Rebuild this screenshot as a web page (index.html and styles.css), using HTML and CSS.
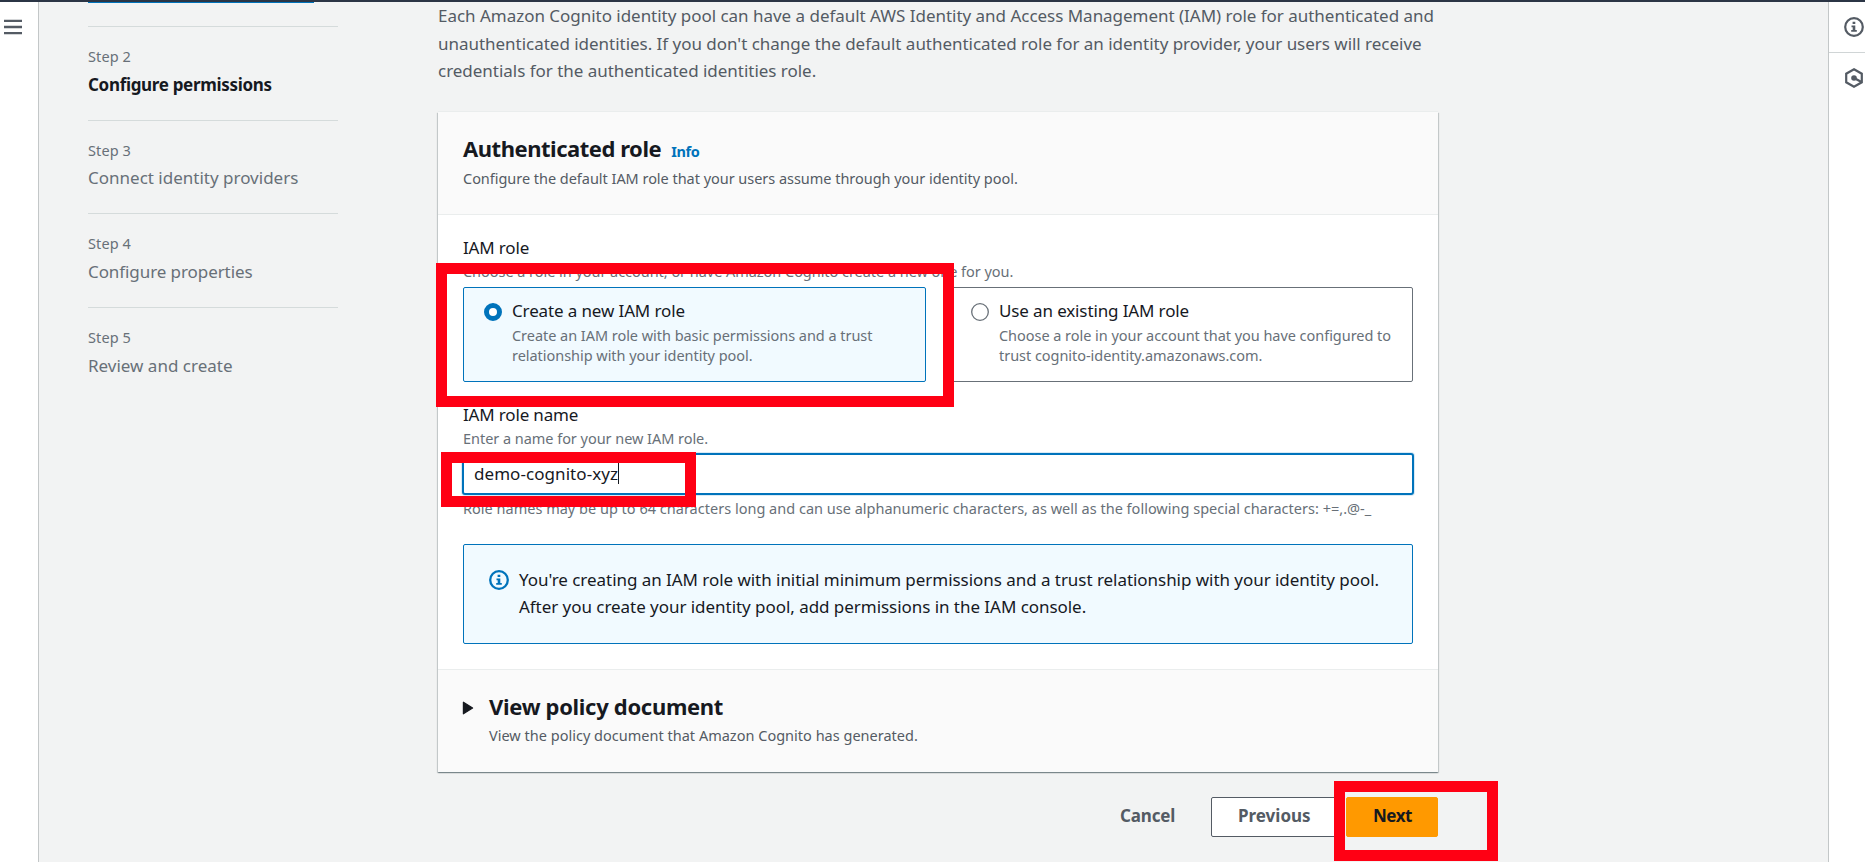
FILE: index.html
```
<!DOCTYPE html>
<html lang="en">
<head>
<meta charset="utf-8">
<title>Configure permissions - Amazon Cognito</title>
<link rel="stylesheet" href="styles.css">
</head>
<body>
<div class="topbar"></div>
<div class="shell">
  <nav class="rail rail-left">
    <svg class="menu-icon" width="18" height="16" viewBox="0 0 18 16"><path d="M0 1.9h18M0 8h18M0 14.1h18" stroke="#545b64" stroke-width="2.3"/></svg>
  </nav>

  <main class="main">
    <aside class="steps">
      <div class="step-first"><div class="step-underline"></div></div>
      <div class="step"><div class="step-label">Step 2</div><div class="step-name current">Configure permissions</div></div>
      <div class="step"><div class="step-label">Step 3</div><div class="step-name">Connect identity providers</div></div>
      <div class="step"><div class="step-label">Step 4</div><div class="step-name tight">Configure properties</div></div>
      <div class="step"><div class="step-label">Step 5</div><div class="step-name">Review and create</div></div>
    </aside>

    <div class="content">
      <p class="intro">Each Amazon Cognito identity pool can have a default AWS Identity and Access Management (IAM) role for authenticated and<br>unauthenticated identities. If you don't change the default authenticated role for an identity provider, your users will receive<br>credentials for the authenticated identities role.</p>

      <section class="card">
        <header class="card-header">
          <div class="title-row"><h2 class="title">Authenticated role</h2><a class="info">Info</a></div>
          <div class="subtitle">Configure the default IAM role that your users assume through your identity pool.</div>
        </header>

        <div class="card-body">
          <div class="label">IAM role</div>
          <div class="hint">Choose a role in your account, or have Amazon Cognito create a new one for you.</div>
          <div class="tiles">
            <div class="tile selected">
              <svg class="radio" width="18" height="18" viewBox="0 0 18 18"><circle cx="9" cy="9" r="6.5" fill="#fff" stroke="#0073bb" stroke-width="5"/></svg>
              <div>
                <div class="tile-title">Create a new IAM role</div>
                <div class="tile-desc">Create an IAM role with basic permissions and a trust<br>relationship with your identity pool.</div>
              </div>
            </div>
            <div class="tile">
              <svg class="radio" width="18" height="18" viewBox="0 0 18 18"><circle cx="9" cy="9" r="8.3" fill="#fff" stroke="#687078" stroke-width="1.3"/></svg>
              <div>
                <div class="tile-title">Use an existing IAM role</div>
                <div class="tile-desc">Choose a role in your account that you have configured to<br>trust cognito-identity.amazonaws.com.</div>
              </div>
            </div>
          </div>

          <div class="label name-label">IAM role name</div>
          <div class="hint">Enter a name for your new IAM role.</div>
          <div class="input"><span class="input-text">demo-cognito-xyz</span><span class="caret"></span></div>
          <div class="hint constraint">Role names may be up to 64 characters long and can use alphanumeric characters, as well as the following special characters: +=,.@-_</div>

          <div class="alert">
            <svg class="alert-icon" width="20" height="20" viewBox="0 0 20 20"><circle cx="10" cy="10" r="8.8" fill="none" stroke="#0073bb" stroke-width="2.3"/><path d="M8.6 4.8h2.7v2.3H8.6zM7.5 8.5h3.8v4.4h1.5v1.9H7.2v-1.9h1.5v-2.6H7.5z" fill="#0073bb"/></svg>
            <div class="alert-text">You're creating an IAM role with initial minimum permissions and a trust relationship with your identity pool.<br>After you create your identity pool, add permissions in the IAM console.</div>
          </div>
        </div>

        <footer class="card-footer">
          <svg class="arrow" width="12" height="14" viewBox="0 0 12 14"><path d="M1.4 1.2v11.6L10.600 7z" fill="#16191f" stroke="#16191f" stroke-width="1.2" stroke-linejoin="round"/></svg>
          <div>
            <h2 class="title policy">View policy document</h2>
            <div class="subtitle policy-note">View the policy document that Amazon Cognito has generated.</div>
          </div>
        </footer>
      </section>

      <div class="actions">
        <button class="btn link">Cancel</button>
        <button class="btn normal">Previous</button>
        <button class="btn primary">Next</button>
      </div>
    </div>
  </main>

  <aside class="rail rail-right">
    <div class="tool tool-info"><svg width="20" height="20" viewBox="0 0 20 20"><circle cx="10" cy="10" r="8.8" fill="none" stroke="#545b64" stroke-width="2.2"/><path d="M8.6 4.8h2.7v2.3H8.6zM7.5 8.5h3.8v4.4h1.5v1.9H7.2v-1.9h1.5v-2.6H7.5z" fill="#545b64"/></svg></div>
    <div class="tool"><svg width="20" height="20" viewBox="0 0 20 20"><path d="M10 1.3l7.8 4.4v8.6L10 18.7l-7.8-4.4V5.7z" fill="none" stroke="#545b64" stroke-width="2.2"/><circle cx="10" cy="10" r="2.8" fill="#545b64"/><path d="M10 10l7.5 4" stroke="#545b64" stroke-width="2.4"/></svg></div>
  </aside>
</div>

<div class="mark mark-role"></div>
<div class="mark mark-name"></div>
<div class="mark mark-next"></div>
</body>
</html>
```
FILE: styles.css
```
* { box-sizing: border-box; }
html, body { margin: 0; height: 862px; overflow: hidden; }
body {
  position: relative;
  display: flex;
  flex-direction: column;
  font-family: "Noto Sans", "Open Sans", sans-serif;
  font-size: 17px;
  color: #16191f;
  background: #f2f3f3;
}
h2, p { margin: 0; }
svg { display: block; flex: none; }

.topbar { height: 2px; flex: none; background: #2b3545; }
.shell { flex: 1; min-height: 0; display: flex; }

.rail { flex: none; background: #fff; }
.rail-left { width: 39px; border-right: 1px solid #c3c7c8; padding: 17px 0 0 4px; }
.rail-right { width: 37px; border-left: 1px solid #c3c7c8; }
.tool { height: 51px; padding: 15px 0 0 15px; }
.tool-info { border-bottom: 1px solid #d0d5d6; }

.main { flex: 1; min-width: 0; display: flex; padding-left: 49px; }

.steps { width: 250px; margin-right: 100px; flex: none; }
.step-first { height: 24px; }
.step-underline { width: 226px; height: 1px; background: #0073bb; }
.step { height: 93.7px; border-top: 1px solid #d5dbdb; padding-top: 19.1px; color: #687078; }
.step-label { font-size: 14.5px; line-height: 20px; letter-spacing: 0.1px; margin-bottom: 4.5px; }
.step-name { line-height: 27.5px; }
.current { color: #16191f; font-weight: 700; letter-spacing: -0.32px; }
.tight { letter-spacing: -0.08px; }

.content { width: 1000px; flex: none; }
.intro { padding-top: 0.3px; height: 110px; line-height: 27.5px; color: #545b64; letter-spacing: -0.025px; white-space: nowrap; }

.card {
  height: 660px;
  background: #fff;
  display: flex;
  flex-direction: column;
  box-shadow: 0 1px 1px 0 rgba(0, 28, 36, 0.3), 1px 1px 1px 0 rgba(0, 28, 36, 0.15), -1px 1px 1px 0 rgba(0, 28, 36, 0.15), 0 -1px 0 0 #eaeded;
}
.card-header { height: 103px; flex: none; padding: 21.5px 25px 0; background: #fafafa; border-bottom: 1px solid #eaeded; }
.title-row { display: flex; align-items: baseline; gap: 10px; }
.title { font-size: 22px; line-height: 28px; font-weight: 700; letter-spacing: -0.47px; }
.policy { letter-spacing: -0.31px; }
.info { font-size: 14.5px; font-weight: 700; color: #0073bb; letter-spacing: -0.4px; }
.subtitle { margin-top: 6.5px; font-size: 14.5px; line-height: 20px; letter-spacing: -0.033px; color: #545b64; }
.policy-note { margin-top: 5.5px; letter-spacing: 0.01px; }

.card-body { height: 454px; flex: none; padding: 22.4px 25px 0; }
.label { line-height: 22px; letter-spacing: -0.17px; }
.hint { margin-top: 2px; font-size: 14.5px; line-height: 20px; letter-spacing: -0.04px; color: #687078; white-space: nowrap; }
.tiles { display: grid; grid-template-columns: 463px 463px; gap: 24px; margin-top: 5.6px; }
.tile { height: 95px; display: flex; gap: 10px; padding: 12.4px 19px 0 20px; border: 1px solid #687078; border-radius: 2px; background: #fff; }
.selected { border-color: #0073bb; background: #f1faff; }
.radio { margin-top: 3px; }
.tile-title { line-height: 22px; letter-spacing: -0.13px; }
.tile-desc { margin-top: 3px; font-size: 14.5px; line-height: 20px; letter-spacing: -0.04px; color: #687078; white-space: nowrap; }
.name-label { margin-top: 22.4px; }
.input {
  display: flex;
  align-items: center;
  width: 952px;
  height: 42px;
  margin: 4.6px 0 0 -1px;
  padding: 0 0 1px 10px;
  border: 2px solid #0073bb;
  border-radius: 3px;
  background: #fff;
  box-shadow: 0 0 0 1px rgba(0, 115, 187, 0.15);
}
.input-text { letter-spacing: 0.06px; }
.caret { width: 1px; height: 22px; background: #16191f; }
.constraint { margin-top: 3px; letter-spacing: 0.01px; }
.alert { display: flex; gap: 10px; height: 100px; margin-top: 26px; padding: 21.2px 25px 0; border: 1px solid #0073bb; border-radius: 2px; background: #f1faff; }
.alert-icon { margin-top: 3.8px; }
.alert-text { line-height: 27px; letter-spacing: -0.045px; white-space: nowrap; }

.card-footer { flex: 1; display: flex; gap: 15px; padding: 21.5px 25px 0 24px; background: #fafafa; border-top: 1px solid #eaeded; }
.arrow { margin-top: 9px; }

.actions { display: flex; justify-content: flex-end; margin-top: 25px; }
.btn { height: 40px; font: 700 17px/22px "Noto Sans", sans-serif; padding: 0 26px 2px; border: 1px solid transparent; border-radius: 2px; }
.link { width: 109px; margin-right: 9px; background: none; color: #545b64; letter-spacing: -0.15px; }
.normal { width: 126px; margin-right: 9px; background: #fff; border-color: #545b64; color: #545b64; letter-spacing: 0; }
.primary { width: 92px; background: #ff9900; border-color: #ff9900; color: #16191f; letter-spacing: -0.5px; }

/* Highlight frames laid over the page */
.mark { position: absolute; border: 11px solid #ff0014; }
.mark-role { left: 436px; top: 263px; width: 518px; height: 144px; }
.mark-name { left: 441px; top: 452px; width: 255px; height: 55px; }
.mark-next { left: 1334px; top: 781px; width: 164px; height: 80px; }
```
